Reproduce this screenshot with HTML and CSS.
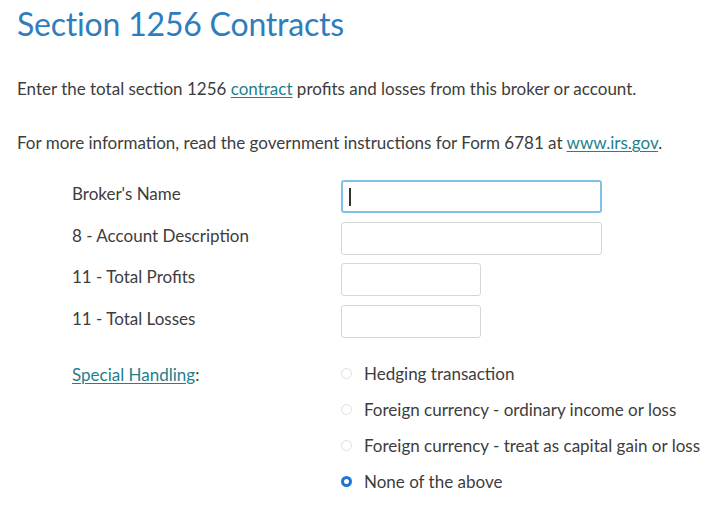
FILE: index.html
```html
<!DOCTYPE html>
<html>
<head>
<meta charset="utf-8">
<link rel="stylesheet" href="styles.css">
</head>
<body>
<div class="page">
  <h1 class="title">Section 1256 Contracts</h1>
  <p class="intro">Enter the total section 1256 <a class="link" href="#">contract</a> profits and losses from this broker or account.</p>
  <p class="info">For more information, read the government instructions for Form 6781 at <a class="link" href="#">www.irs.gov</a>.</p>
  <div class="form">
    <div class="row">
      <div class="label">Broker's Name</div>
      <div class="field"><div class="input wide focused"><span class="caret"></span></div></div>
    </div>
    <div class="row">
      <div class="label">8 - Account Description</div>
      <div class="field"><div class="input wide"></div></div>
    </div>
    <div class="row">
      <div class="label">11 - Total Profits</div>
      <div class="field"><div class="input narrow"></div></div>
    </div>
    <div class="row">
      <div class="label">11 - Total Losses</div>
      <div class="field"><div class="input narrow"></div></div>
    </div>
    <div class="row special">
      <div class="label"><a class="link" href="#">Special Handling</a>:</div>
      <div class="radios">
        <div class="radio"><span class="dot"></span>Hedging transaction</div>
        <div class="radio"><span class="dot"></span>Foreign currency - ordinary income or loss</div>
        <div class="radio"><span class="dot"></span>Foreign currency - treat as capital gain or loss</div>
        <div class="radio"><span class="dot checked"></span>None of the above</div>
      </div>
    </div>
  </div>
</div>
</body>
</html>
```
FILE: styles.css
```css
html, body {
  margin: 0;
  padding: 0;
  background: #fff;
}
body {
  font-family: Lato, "Noto Sans", sans-serif;
  color: #3d3d3d;
  font-size: 17px;
}
.page {
  padding: 5px 0 0 17px;
}
.title {
  margin: 0;
  font-size: 32px;
  font-weight: 400;
  color: #2e7dbd;
  line-height: 38px;
  letter-spacing: -0.2px;
}
.intro {
  margin: 36px 0 0 0;
  line-height: 20px;
}
.info {
  margin: 34px 0 0 0;
  line-height: 20px;
}
.link {
  color: #237f8e;
  text-decoration: underline;
  text-underline-offset: 2px;
}
.form {
  margin-top: 27px;
  padding-left: 55px;
}
.row {
  display: flex;
  align-items: center;
  height: 33px;
  margin-bottom: 8.5px;
}
.label {
  width: 269px;
  flex: none;
  margin-top: -6px;
}
.input {
  border: 1px solid #d6d6d6;
  border-radius: 3px;
  box-sizing: border-box;
  height: 33px;
  display: flex;
  align-items: center;
}
.wide { width: 261px; }
.narrow { width: 140px; }
.focused {
  border: 2px solid #7cc3e6;
}
.caret {
  display: block;
  width: 2px;
  height: 18px;
  background: #333;
  margin-left: 6px;
}
.special {
  align-items: flex-start;
  height: auto;
  margin-top: 26px;
}
.special .label {
  margin-top: 0;
}
.radios {
  display: flex;
  flex-direction: column;
  margin-top: -8px;
}
.radio {
  display: flex;
  align-items: center;
  height: 36px;
}
.dot {
  width: 9px;
  height: 9px;
  border: 1px solid #e0e0e0;
  border-radius: 50%;
  margin: 0 12px 0 0;
  flex: none;
}
.dot.checked {
  width: 5px;
  height: 5px;
  border: 3px solid #1f74d6;
  background: #fff;
}
```
